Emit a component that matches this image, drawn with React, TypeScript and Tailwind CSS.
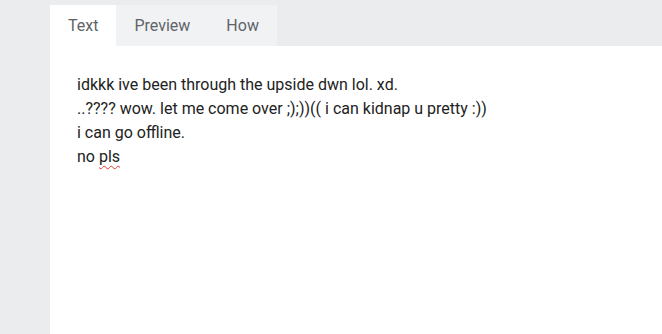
export default function App() {
  const tabs = ["Text", "Preview", "How"];
  return (
    <div
      className="flex h-[334px] w-[662px] flex-col bg-[#ebecee] pl-[50px] pt-[5px]"
      style={{ fontFamily: "Roboto, 'Liberation Sans', sans-serif" }}
    >
      <div className="flex h-[41px]">
        {tabs.map((t, i) => (
          <div
            key={t}
            className={`flex items-center px-[18px] text-[16px] text-[#5f6368] ${
              i === 0 ? "bg-white" : "bg-[#f1f2f4]"
            }`}
          >
            {t}
          </div>
        ))}
      </div>
      <div className="flex-1 bg-white px-[27px] pt-[27px] text-[16px] leading-[24px] text-[#222]">
        <p>idkkk ive been through the upside dwn lol. xd.</p>
        <p>..???? wow. let me come over ;);))(( i can kidnap u pretty :))</p>
        <p>i can go offline.</p>
        <p>
          no{" "}
          <span className="underline decoration-[#e53935] decoration-wavy decoration-1 underline-offset-[3px]">
            pls
          </span>
        </p>
      </div>
    </div>
  );
}
